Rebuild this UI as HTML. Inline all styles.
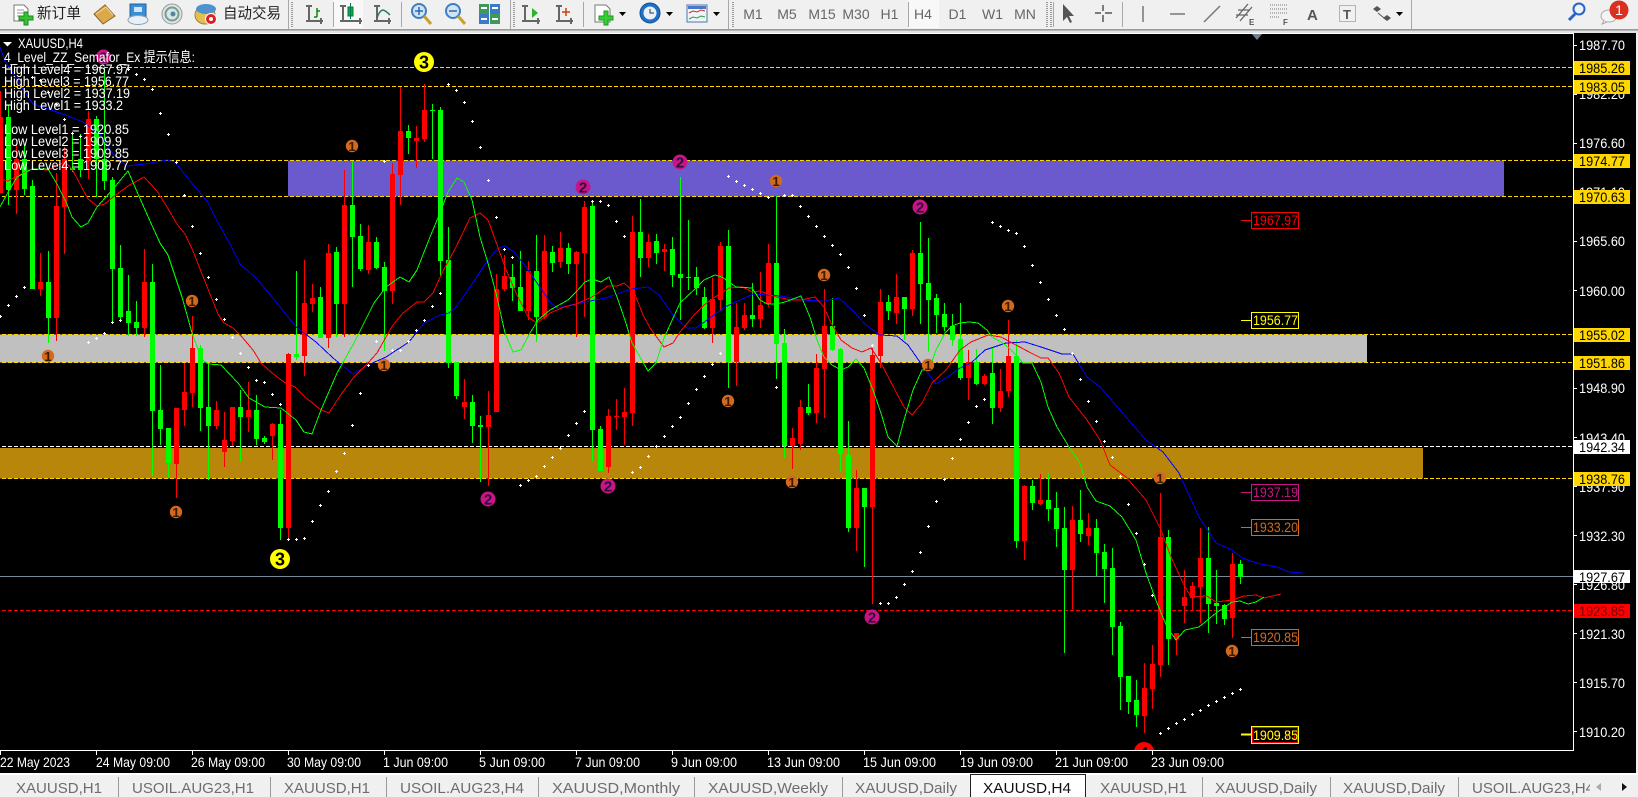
<!DOCTYPE html>
<html><head><meta charset="utf-8"><title>XAUUSD,H4</title>
<style>
html,body{margin:0;padding:0;background:#000;width:1638px;height:797px;overflow:hidden}
svg{position:absolute;left:0;top:0;display:block}
text{font-family:"Liberation Sans","Noto Sans CJK SC",sans-serif}
.ax{fill:#fff;font-size:14px}
.tg{fill:#000;font-size:14px}
.tm{fill:#fff;font-size:14px}
.tb{fill:#6d6d6d;font-size:15px}
.tf{fill:#666;font-size:14px;text-anchor:middle}
.lg{fill:#fff;font-size:14px}
.c1{fill:#d2691e}.c2{fill:#c71585}
.d1{font-size:13px;font-weight:bold;fill:#3a1a00;text-anchor:middle}
.d2{font-size:15px;font-weight:bold;fill:#300a38;text-anchor:middle}
</style></head><body>
<svg width="1638" height="797" viewBox="0 0 1638 797" xmlns="http://www.w3.org/2000/svg">
<defs><clipPath id="cl"><rect x="0" y="34" width="1573" height="716"/></clipPath></defs>
<rect width="1638" height="797" fill="#000"/>
<!-- toolbar -->
<rect width="1638" height="29" fill="#f0f0f0"/>
<rect y="29" width="1638" height="1" fill="#9a9a9a"/><rect y="30" width="1638" height="1" fill="#b4b4b4"/><rect y="31" width="1638" height="2" fill="#e2e2e2"/>
<rect x="0" y="33" width="1574" height="1" fill="#fff"/>
<rect x="333" y="0" width="30" height="28" fill="#f8f8f8"/><rect x="908" y="0" width="31" height="28" fill="#f8f8f8"/>
<g fill="#a8a8a8"><rect x="288" y="0" width="1" height="29"/><rect x="333" y="2" width="1" height="25"/><rect x="401" y="2" width="1" height="25"/><rect x="510" y="0" width="1" height="29"/><rect x="583" y="2" width="1" height="25"/><rect x="728" y="0" width="1" height="29"/><rect x="908" y="2" width="1" height="25"/><rect x="1053" y="2" width="1" height="25"/><rect x="1122" y="2" width="1" height="25"/><rect x="1411" y="0" width="1" height="29"/></g>
<g stroke="#999" stroke-width="2" stroke-dasharray="1 1" fill="none"><path d="M292 2V27M514 2V27M733 2V27M1047 2V27M1051 2V27"/></g>
<!-- new order -->
<path d="M14 5h10l4 4v12H14z" fill="#fff" stroke="#777"/><path d="M17 10h7M17 13h8M17 16h5" stroke="#999"/><path d="M24 15h4v4h5v4h-5v5h-4v-5h-5v-4h5z" transform="translate(0,-3)" fill="#35c035" stroke="#1d8a1d"/>
<text x="37" y="18" font-size="15" fill="#222" textLength="44" lengthAdjust="spacingAndGlyphs">新订单</text>
<path d="M94 14l11-9 10 11-12 8z" fill="#dca94a" stroke="#8a6528"/><path d="M96 14l10-7 7 8" fill="none" stroke="#f2d794"/>
<rect x="130" y="4" width="16" height="13" fill="#3b8ed4" stroke="#1f5f9a"/><rect x="134" y="7" width="8" height="5" fill="#cfe6f7"/><ellipse cx="138" cy="20" rx="10" ry="4.500" fill="#e8eff5" stroke="#8aa3b8"/>
<circle cx="172" cy="14" r="10" fill="#dfe3e3" stroke="#999"/><circle cx="172" cy="14" r="6.500" fill="none" stroke="#6f9f97" stroke-width="2"/><circle cx="173" cy="14" r="2.500" fill="#4a8a9a"/>
<ellipse cx="205" cy="15" rx="10" ry="9" fill="#e5c050" stroke="#a08030"/><ellipse cx="206" cy="9" rx="10" ry="5" fill="#4c93cf"/><circle cx="211" cy="19" r="5.500" fill="#e02020" stroke="#fff"/><circle cx="211" cy="19" r="2" fill="#fff"/>
<text x="223" y="18" font-size="15" fill="#222" textLength="58" lengthAdjust="spacingAndGlyphs">自动交易</text>
<!-- chart type icons -->
<g fill="none" stroke="#666" stroke-width="2">
<path d="M309 5V21H323M306 21H312M321 18V24M306 6H312"/><path d="M343 5V21H362M340 21H346M360 18V24M340 6H346"/><path d="M377 5V21H391M374 21H380M389 18V24M374 6H380"/><path d="M525 5V21H540M522 21H528M538 18V24M522 6H528"/><path d="M559 5V21H573M556 21H562M571 18V24M556 6H562"/>
</g>
<path d="M317 17V8M317 17h-3M317 11h3" stroke="#0a8a0a" stroke-width="1.500" fill="none"/>
<rect x="348" y="7" width="5" height="9" fill="#18b018" stroke="#075"/><path d="M350.500 3V19" stroke="#075"/>
<path d="M377 18c4-12 8-8 13-3" fill="none" stroke="#2a7a5a" stroke-width="1.500"/>
<path d="M532 8l6 5-6 5z" fill="#2ab52a"/>
<path d="M566 8v8M562 12h8" stroke="#d04010" stroke-width="1.500"/>
<!-- zoom -->
<circle cx="419" cy="11" r="7" fill="#cfe3f5" stroke="#3f7fbf" stroke-width="2"/><path d="M415 11h8M419 7v8" stroke="#2a6aaa" stroke-width="1.500"/><path d="M424 16l7 8" stroke="#c8a030" stroke-width="3"/>
<circle cx="453" cy="11" r="7" fill="#cfe3f5" stroke="#3f7fbf" stroke-width="2"/><path d="M449 11h8" stroke="#2a6aaa" stroke-width="1.500"/><path d="M458 16l7 8" stroke="#c8a030" stroke-width="3"/>
<rect x="479" y="4" width="10" height="10" fill="#3f9a5a"/><rect x="490" y="4" width="10" height="10" fill="#3a7ac8"/><rect x="479" y="14" width="10" height="10" fill="#3a7ac8"/><rect x="490" y="14" width="10" height="10" fill="#3f9a5a"/><path d="M481 8h6M492 8h6M481 19h6M492 19h6" stroke="#fff" stroke-width="2"/>
<!-- new chart etc -->
<path d="M595 5h11l4 4v13h-15z" fill="#fff" stroke="#777"/><path d="M604 15h4v5h5v4h-5v5h-4v-5h-5v-4h5z" transform="translate(0,-4)" fill="#35d035" stroke="#1d9a1d"/>
<circle cx="650" cy="13" r="10" fill="#1f70c8" stroke="#14508f"/><circle cx="650" cy="13" r="6.500" fill="#e8f0f8"/><path d="M650 9v4h4" stroke="#333" fill="none"/>
<rect x="687" y="5" width="20" height="17" fill="#eef4fa" stroke="#4a78a8"/><rect x="688" y="6" width="18" height="3" fill="#4a78c8"/><path d="M689 13l4-2 4 1 4-2 4 1" stroke="#d03020" fill="none"/><path d="M689 19l4-2 4 1 4-2 4 1" stroke="#30a040" fill="none"/>
<path d="M619 12h7l-3.500 4zM666 12h7l-3.500 4zM713 12h7l-3.500 4zM1396 12h7l-3.500 4z" fill="#000"/>
<text class="tf" x="753" y="19">M1</text><text class="tf" x="787" y="19">M5</text><text class="tf" x="822" y="19">M15</text><text class="tf" x="856" y="19">M30</text><text class="tf" x="889.500" y="19">H1</text><text class="tf" x="923" y="19">H4</text><text class="tf" x="957.500" y="19">D1</text><text class="tf" x="992.500" y="19">W1</text><text class="tf" x="1025" y="19">MN</text>
<path d="M1063 4v17l4-4 3 6 2-1-3-6h5z" fill="#555"/>
<path d="M1103 5V11M1103 15V22M1095 13H1101M1105 13H1112" stroke="#555" stroke-width="1.500" fill="none"/>
<path d="M1143 6V22" stroke="#777" stroke-width="1.500"/><path d="M1170 14H1185" stroke="#777" stroke-width="1.500"/><path d="M1204 22L1220 6" stroke="#777" stroke-width="1.500"/>
<path d="M1236 18L1248 4M1240 21L1252 7M1238 10h12M1236 15h12" stroke="#666" stroke-width="1.300" fill="none"/><text x="1249" y="25" font-size="8" font-weight="bold" fill="#555">E</text>
<path d="M1270 5h17M1270 9h17M1270 13h17M1270 17h10" stroke="#777" stroke-dasharray="1 1" fill="none"/><text x="1283" y="25" font-size="8" font-weight="bold" fill="#555">F</text>
<text x="1307" y="20" font-size="15" font-weight="bold" fill="#555">A</text>
<rect x="1339.500" y="5.500" width="16" height="16" fill="none" stroke="#777" stroke-dasharray="1 1"/><text x="1343" y="19" font-size="13" font-weight="bold" fill="#555">T</text>
<path d="M1373 9l4-3 4 3-4 3zM1383 18l4-3 4 3-4 3z" fill="#555"/><path d="M1378 13l6 5" stroke="#555"/>
<circle cx="1579" cy="9" r="5.500" fill="#e8f2fb" stroke="#2a62c8" stroke-width="2"/><path d="M1575 14l-6 6" stroke="#2a62c8" stroke-width="3"/>
<ellipse cx="1609" cy="16" rx="8" ry="6" fill="#f5f5f5" stroke="#aaa"/><path d="M1604 21l-2 3 5-2" fill="#f5f5f5" stroke="#aaa"/>
<circle cx="1619" cy="10" r="9.500" fill="#d93020"/><text x="1619" y="15" font-size="14" fill="#fff" text-anchor="middle">1</text>
<!-- chart -->
<g clip-path="url(#cl)">
<rect x="288" y="160.500" width="1216" height="36" fill="#6a5acd"/>
<rect x="0" y="334.500" width="1367" height="28" fill="#c0c0c0"/>
<rect x="0" y="448" width="1423" height="30.500" fill="#b8860b"/>
<g shape-rendering="crispEdges" fill="none" stroke-dasharray="4 2">
<path d="M2 67.500H1573M2 86.500H1573M2 160.500H1573M2 196.500H1573M2 334.500H1573M2 362.500H1573M2 478.500H1573" stroke="#ffd700"/>
<path d="M2 446.500H1573" stroke="#fff"/>
<path d="M2 610.500H1573" stroke="#f00"/>
</g>
<rect x="0" y="576" width="1573" height="1" fill="#778899"/>
<path d="M1251 33h12l-6 7z" fill="#708090"/>
<g shape-rendering="crispEdges" fill="none">
<path stroke="#0f0" d="M8.500 105V205M24.500 146V195M32.500 180V289M48.500 251V343M72.500 134V172M80.500 134V177M96.500 116V197M104.500 68V190M112.500 177V323M120.500 245V322M128.500 275V336M136.500 301V336M152.500 264V476M160.500 365V445M168.500 428V478M200.500 345V431M208.500 363V480M240.500 390V462M256.500 395V445M264.500 436V444M280.500 410V540M296.500 271V360M320.500 287V338M336.500 247V337M352.500 161V287M360.500 224V271M376.500 237V269M384.500 262V351M408.500 125V154M432.500 104V159M440.500 107V277M448.500 227V368M456.500 362V399M472.500 395V443M480.500 416V482M512.500 264V301M520.500 251V311M536.500 235V342M552.500 246V272M568.500 243V274M592.500 201V461M600.500 426V471M640.500 199V277M656.500 234V264M672.500 237V287M680.500 177V320M688.500 220V290M696.500 267V295M704.500 287V329M728.500 230V388M752.500 283V327M776.500 196V379M784.500 329V458M808.500 384V415M832.500 298V351M840.500 348V472M848.500 421V532M864.500 488V567M888.500 295V320M904.500 297V340M920.500 222V324M928.500 238V352M936.500 294V333M944.500 303V331M952.500 314V346M960.500 303V380M976.500 349V385M992.500 348V424M1016.500 340V548M1032.500 480V510M1048.500 473V521M1056.500 492V547M1064.500 507V653M1080.500 490V542M1096.500 519V576M1104.500 544V603M1112.500 548V655M1120.500 622V710M1128.500 676V714M1136.500 680V727M1168.500 530V665M1208.500 527V633M1216.500 570V624M1224.500 604V625M1240.500 560V584"/>
<path stroke="#0f0" stroke-width="5" d="M8.500 117V190M24.500 159V189M32.500 186V289M48.500 282V318M72.500 168V170M80.500 159V170M96.500 119V159M104.500 159V181M112.500 180V269M120.500 268V317M128.500 311V323M136.500 322V328M152.500 282V411M160.500 410V429M168.500 428V463M200.500 348V408M208.500 407V426M240.500 407V417M256.500 410V439M264.500 438V442M280.500 424V528M296.500 354V357M320.500 297V338M336.500 252V304M352.500 205V237M360.500 236V269M376.500 242V268M384.500 267V291M408.500 131V138M432.500 110V111M440.500 110V261M448.500 260V363M456.500 362V396M472.500 402V426M480.500 425V427M512.500 277V288M520.500 287V311M536.500 271V317M552.500 252V263M568.500 248V264M592.500 206V430M600.500 429V471M640.500 232V258M656.500 241V253M672.500 249V275M680.500 274V278M688.500 277V278M696.500 277V288M704.500 297V328M728.500 246V362M752.500 315V319M776.500 263V344M784.500 343V446M808.500 407V413M832.500 326V350M840.500 349V454M848.500 455V528M864.500 488V507M888.500 302V311M904.500 297V309M920.500 253V284M928.500 283V300M936.500 298V315M944.500 314V327M952.500 326V340M960.500 339V378M976.500 362V384M992.500 373V408M1016.500 356V541M1032.500 486V503M1048.500 500V509M1056.500 508V529M1064.500 528V570M1080.500 520V534M1096.500 528V553M1104.500 552V569M1112.500 568V627M1120.500 626V677M1128.500 676V702M1136.500 700V715M1168.500 537V639M1208.500 558V604M1216.500 603V606M1224.500 605V619M1240.500 564V577"/>
<path stroke="#f00" d="M.5 91V193M16.500 144V214M40.500 253V296M56.500 173V341M64.500 147V254M88.500 111V179M144.500 249V337M176.500 408V498M184.500 363V426M192.500 316V407M216.500 401V429M224.500 412V467M232.500 407V446M248.500 382V432M272.500 423V460M288.500 353V538M304.500 260V376M312.500 284V312M328.500 244V348M344.500 170V337M368.500 225V274M392.500 163V304M400.500 87V205M416.500 126V168M424.500 84V142M464.500 379V419M488.500 391V486M496.500 274V412M504.500 255V291M528.500 261V320M544.500 235V319M560.500 232V268M576.500 251V337M584.500 201V317M608.500 409V473M616.500 399V430M624.500 388V445M632.500 216V426M648.500 234V267M664.500 244V271M712.500 278V343M720.500 242V311M736.500 303V386M744.500 303V330M760.500 272V328M768.500 244V307M792.500 428V469M800.500 400V450M816.500 354V423M824.500 289V418M856.500 470V551M872.500 348V604M880.500 289V368M896.500 274V324M912.500 250V316M968.500 350V400M984.500 374V385M1000.500 369V412M1008.500 320V397M1024.500 485V560M1040.500 474V505M1072.500 506V609M1088.500 513V545M1144.500 663V733M1152.500 645V709M1160.500 493V677M1176.500 633V655M1184.500 570V623M1192.500 582V611M1200.500 528V623M1232.500 553V638"/>
<path stroke="#f00" stroke-width="5" d="M.5 117V193M16.500 159V190M40.500 282V289M56.500 206V318M64.500 159V207M88.500 119V161M144.500 282V328M176.500 408V464M184.500 392V410M192.500 348V393M216.500 410V426M224.500 440V452M232.500 407V441M248.500 410V417M272.500 424V436M288.500 354V528M304.500 303V356M312.500 298V304M328.500 253V338M344.500 205V304M368.500 242V270M392.500 174V291M400.500 131V175M416.500 138V141M424.500 110V139M464.500 402V407M488.500 415V427M496.500 289V412M504.500 276V289M528.500 271V311M544.500 251V317M560.500 248V262M576.500 252V264M584.500 207V253M608.500 416V467M616.500 416V417M624.500 412V417M632.500 232V413M648.500 242V258M664.500 249V252M712.500 299V328M720.500 246V300M736.500 327V362M744.500 315V328M760.500 305V319M768.500 263V304M792.500 438V446M800.500 407V444M816.500 368V413M824.500 326V369M856.500 488V528M872.500 355V507M880.500 302V356M896.500 297V313M912.500 253V309M968.500 362V378M984.500 376V384M1000.500 391V408M1008.500 356V391M1024.500 486V541M1040.500 500V504M1072.500 520V570M1088.500 528V536M1144.500 688V716M1152.500 664V689M1160.500 537V665M1176.500 633V639M1184.500 597V606M1192.500 586V598M1200.500 558V587M1232.500 564V618"/>
</g>
<g fill="none" shape-rendering="crispEdges">
<polyline stroke="#00f" points="0,47 5,61 23,89 33,104 63,114 83,122 100,134 113,154 127,166 145,164 167,160 175,162 190,181 207,201 217,221 230,244 240,264 257,279 277,303 296,327 316,342 333,358 353,374 368,365 386,357 409,342 424,323 440,315 449,313 456,307 470,287 486,263 498,248 505,246 514,252 523,263 533,277 550,302 557,308 585,302 606,298 631,289 648,287 659,295 673,315 687,328 696,328 725,307 753,294 781,296 801,300 824,301 839,298 852,310 866,325 880,335 897,336 908,345 922,365 936,384 946,378 960,368 971,363 985,350 1006,343 1025,342 1041,347 1062,354 1073,354 1087,377 1100,387 1146,440 1163,452 1179,473 1199,517 1216,543 1232,550 1242,558 1260,564 1277,567 1289,572 1303,573"/>
<polyline stroke="#f00" points="0,179 8,181 17,176 32,169 48,170 65,162 72,169 80,184 88,199 97,206 105,204 113,197 128,186 144,177 157,191 167,207 177,224 185,234 193,251 202,274 210,294 218,314 224,323 233,328 242,337 253,350 261,363 272,373 284,382 295,387 305,397 321,410 329,413 342,393 354,377 368,363 377,353 386,337 393,325 403,313 417,302 424,302 433,293 442,273 456,247 470,218 480,213 488,220 496,242 505,267 516,293 528,317 537,323 550,313 564,307 576,304 592,297 608,286 617,286 624,283 634,292 643,315 650,328 664,347 673,343 680,332 694,315 704,305 715,297 729,288 743,287 752,292 760,291 776,297 792,300 801,300 815,297 824,307 831,323 841,340 852,348 862,352 871,348 881,363 895,390 904,407 912,415 922,403 932,383 946,370 960,350 971,342 988,335 1001,337 1016,345 1031,353 1041,358 1048,358 1059,373 1069,397 1087,420 1100,440 1110,465 1126,477 1146,500 1161,530 1171,557 1183,583 1191,597 1207,596 1216,602 1232,600 1244,596 1256,595 1264,598 1281,594"/>
<polyline stroke="#0f0" points="0,207 7,194 17,177 32,169 48,169 57,184 67,204 72,217 81,227 88,223 97,207 113,189 128,171 138,194 150,221 160,243 168,255 182,297 192,333 202,360 209,364 221,365 238,383 249,398 265,407 281,408 296,420 304,432 312,434 321,410 337,373 354,343 374,303 386,287 400,277 409,282 417,270 430,237 440,213 448,192 457,178 464,182 472,200 480,237 488,263 496,293 505,333 513,352 521,350 530,333 538,320 550,310 568,300 576,292 585,282 592,279 601,282 609,277 617,297 625,320 632,343 648,371 656,363 664,338 680,303 696,288 704,280 715,275 722,277 736,287 752,288 760,300 767,304 776,304 785,302 801,296 810,317 817,340 824,357 832,365 841,370 848,367 856,359 864,368 873,390 881,413 888,437 897,446 904,420 913,390 922,370 929,370 936,350 945,333 952,326 960,323 969,322 978,323 987,330 992,337 1001,342 1009,348 1016,355 1023,363 1032,363 1041,382 1048,407 1057,427 1069,447 1080,463 1087,487 1096,501 1110,506 1122,517 1136,540 1146,573 1157,603 1167,627 1176,640 1185,630 1199,627 1216,613 1232,602 1240,601 1248,604 1256,602 1264,597"/>
</g>
<path shape-rendering="crispEdges" fill="none" stroke="#fff" d="M-1 316.500h3m-1.500-1.500v3M7 305.500h3m-1.500-1.500v3M15 296.500h3m-1.500-1.500v3M23 287.500h3m-1.500-1.500v3M31 77.500h3m-1.500-1.500v3M39 80.500h3m-1.500-1.500v3M47 92.500h3m-1.500-1.500v3M55 104.500h3m-1.500-1.500v3M63 119.500h3m-1.500-1.500v3M71 133.500h3m-1.500-1.500v3M79 136.500h3m-1.500-1.500v3M87 342.500h3m-1.500-1.500v3M95 338.500h3m-1.500-1.500v3M103 333.500h3m-1.500-1.500v3M111 322.500h3m-1.500-1.500v3M119 320.500h3m-1.500-1.500v3M127 69.500h3m-1.500-1.500v3M135 74.500h3m-1.500-1.500v3M143 79.500h3m-1.500-1.500v3M151 89.500h3m-1.500-1.500v3M159 113.500h3m-1.500-1.500v3M167 134.500h3m-1.500-1.500v3M175 162.500h3m-1.500-1.500v3M183 195.500h3m-1.500-1.500v3M191 226.500h3m-1.500-1.500v3M199 253.500h3m-1.500-1.500v3M207 277.500h3m-1.500-1.500v3M215 299.500h3m-1.500-1.500v3M223 319.500h3m-1.500-1.500v3M231 337.500h3m-1.500-1.500v3M239 353.500h3m-1.500-1.500v3M247 367.500h3m-1.500-1.500v3M255 380.500h3m-1.500-1.500v3M263 382.500h3m-1.500-1.500v3M271 394.500h3m-1.500-1.500v3M279 404.500h3m-1.500-1.500v3M287 539.500h3m-1.500-1.500v3M295 539.500h3m-1.500-1.500v3M303 538.500h3m-1.500-1.500v3M311 521.500h3m-1.500-1.500v3M319 505.500h3m-1.500-1.500v3M327 491.500h3m-1.500-1.500v3M335 471.500h3m-1.500-1.500v3M343 453.500h3m-1.500-1.500v3M351 425.500h3m-1.500-1.500v3M359 393.500h3m-1.500-1.500v3M367 365.500h3m-1.500-1.500v3M375 341.500h3m-1.500-1.500v3M383 161.500h3m-1.500-1.500v3M391 350.500h3m-1.500-1.500v3M399 350.500h3m-1.500-1.500v3M407 341.500h3m-1.500-1.500v3M415 330.500h3m-1.500-1.500v3M423 320.500h3m-1.500-1.500v3M431 306.500h3m-1.500-1.500v3M439 293.500h3m-1.500-1.500v3M447 84.500h3m-1.500-1.500v3M455 90.500h3m-1.500-1.500v3M463 102.500h3m-1.500-1.500v3M471 121.500h3m-1.500-1.500v3M479 147.500h3m-1.500-1.500v3M487 180.500h3m-1.500-1.500v3M495 217.500h3m-1.500-1.500v3M503 249.500h3m-1.500-1.500v3M511 257.500h3m-1.500-1.500v3M519 485.500h3m-1.500-1.500v3M527 480.500h3m-1.500-1.500v3M535 476.500h3m-1.500-1.500v3M543 466.500h3m-1.500-1.500v3M551 457.500h3m-1.500-1.500v3M559 448.500h3m-1.500-1.500v3M567 435.500h3m-1.500-1.500v3M575 423.500h3m-1.500-1.500v3M583 411.500h3m-1.500-1.500v3M591 201.500h3m-1.500-1.500v3M599 201.500h3m-1.500-1.500v3M607 205.500h3m-1.500-1.500v3M615 221.500h3m-1.500-1.500v3M623 236.500h3m-1.500-1.500v3M631 472.500h3m-1.500-1.500v3M639 467.500h3m-1.500-1.500v3M647 456.500h3m-1.500-1.500v3M655 446.500h3m-1.500-1.500v3M663 436.500h3m-1.500-1.500v3M671 426.500h3m-1.500-1.500v3M679 417.500h3m-1.500-1.500v3M687 403.500h3m-1.500-1.500v3M695 389.500h3m-1.500-1.500v3M703 376.500h3m-1.500-1.500v3M711 364.500h3m-1.500-1.500v3M719 353.500h3m-1.500-1.500v3M727 176.500h3m-1.500-1.500v3M735 181.500h3m-1.500-1.500v3M743 185.500h3m-1.500-1.500v3M751 189.500h3m-1.500-1.500v3M759 193.500h3m-1.500-1.500v3M767 197.500h3m-1.500-1.500v3M775 387.500h3m-1.500-1.500v3M783 195.500h3m-1.500-1.500v3M791 195.500h3m-1.500-1.500v3M799 206.500h3m-1.500-1.500v3M807 216.500h3m-1.500-1.500v3M815 226.500h3m-1.500-1.500v3M823 236.500h3m-1.500-1.500v3M831 245.500h3m-1.500-1.500v3M839 254.500h3m-1.500-1.500v3M847 267.500h3m-1.500-1.500v3M855 288.500h3m-1.500-1.500v3M863 315.500h3m-1.500-1.500v3M871 345.500h3m-1.500-1.500v3M879 603.500h3m-1.500-1.500v3M887 603.500h3m-1.500-1.500v3M895 597.500h3m-1.500-1.500v3M903 584.500h3m-1.500-1.500v3M911 571.500h3m-1.500-1.500v3M919 552.500h3m-1.500-1.500v3M927 526.500h3m-1.500-1.500v3M935 501.500h3m-1.500-1.500v3M943 479.500h3m-1.500-1.500v3M951 458.500h3m-1.500-1.500v3M959 439.500h3m-1.500-1.500v3M967 422.500h3m-1.500-1.500v3M975 406.500h3m-1.500-1.500v3M983 399.500h3m-1.500-1.500v3M991 222.500h3m-1.500-1.500v3M999 226.500h3m-1.500-1.500v3M1007 230.500h3m-1.500-1.500v3M1015 233.500h3m-1.500-1.500v3M1023 246.500h3m-1.500-1.500v3M1031 265.500h3m-1.500-1.500v3M1039 282.500h3m-1.500-1.500v3M1047 299.500h3m-1.500-1.500v3M1055 315.500h3m-1.500-1.500v3M1063 329.500h3m-1.500-1.500v3M1071 353.500h3m-1.500-1.500v3M1079 379.500h3m-1.500-1.500v3M1087 401.500h3m-1.500-1.500v3M1095 421.500h3m-1.500-1.500v3M1103 441.500h3m-1.500-1.500v3M1111 457.500h3m-1.500-1.500v3M1119 476.500h3m-1.500-1.500v3M1127 504.500h3m-1.500-1.500v3M1135 533.500h3m-1.500-1.500v3M1143 564.500h3m-1.500-1.500v3M1151 595.500h3m-1.500-1.500v3M1159 733.500h3m-1.500-1.500v3M1167 728.500h3m-1.500-1.500v3M1175 723.500h3m-1.500-1.500v3M1183 719.500h3m-1.500-1.500v3M1191 714.500h3m-1.500-1.500v3M1199 710.500h3m-1.500-1.500v3M1207 705.500h3m-1.500-1.500v3M1215 701.500h3m-1.500-1.500v3M1223 697.500h3m-1.500-1.500v3M1231 693.500h3m-1.500-1.500v3M1239 689.500h3m-1.500-1.500v3"/>
<!-- semafor 1 -->
<g class="c1">
<circle cx="48" cy="356" r="6.200"/><circle cx="192" cy="301" r="6.200"/><circle cx="176" cy="512" r="6.200"/><circle cx="384" cy="365" r="6.200"/><circle cx="352" cy="146" r="6.200"/><circle cx="728" cy="401" r="6.200"/><circle cx="824" cy="275" r="6.200"/><circle cx="792" cy="482" r="6.200"/><circle cx="928" cy="365" r="6.200"/><circle cx="1008" cy="306" r="6.200"/><circle cx="776" cy="181" r="6.200"/><circle cx="1160" cy="478" r="6.200"/><circle cx="1232" cy="651" r="6.200"/>
</g>
<g class="d1"><text x="48" y="361">1</text><text x="192" y="306">1</text><text x="176" y="517">1</text><text x="384" y="370">1</text><text x="352" y="151">1</text><text x="728" y="406">1</text><text x="824" y="280">1</text><text x="792" y="487">1</text><text x="928" y="370">1</text><text x="1008" y="311">1</text><text x="776" y="186">1</text><text x="1160" y="483">1</text><text x="1232" y="656">1</text></g>
<!-- semafor 2 -->
<g class="c2"><circle cx="103.500" cy="57" r="7.500"/><circle cx="488" cy="499" r="7.500"/><circle cx="583" cy="187" r="7.500"/><circle cx="680" cy="162" r="7.500"/><circle cx="920" cy="207" r="7.500"/><circle cx="608" cy="486" r="7.500"/><circle cx="872" cy="617" r="7.500"/></g>
<g class="d2"><text x="103.500" y="62.500">2</text><text x="488" y="504.500">2</text><text x="583" y="192.500">2</text><text x="680" y="167.500">2</text><text x="920" y="212.500">2</text><text x="608" y="491.500">2</text><text x="872" y="622.500">2</text></g>
<!-- semafor 3/4 -->
<circle cx="424" cy="62" r="10" fill="#ff0"/><text x="424" y="68.500" font-size="18" font-weight="bold" text-anchor="middle" fill="#000">3</text>
<circle cx="280" cy="559" r="10" fill="#ff0"/><text x="280" y="565.500" font-size="18" font-weight="bold" text-anchor="middle" fill="#000">3</text>
<circle cx="1144" cy="752" r="10" fill="#f00"/><text x="1144" y="758" font-size="16" font-weight="bold" text-anchor="middle" fill="#000">4</text>
<!-- level boxes -->
<g fill="none" shape-rendering="crispEdges">
<path d="M1241 220.500h10" stroke="#f00"/><rect x="1251.500" y="212.500" width="47" height="16" stroke="#f00"/>
<path d="M1241 320.500h10" stroke="#ff0"/><rect x="1251.500" y="312.500" width="47" height="16" stroke="#ff0"/>
<path d="M1241 492.500h10" stroke="#c71585"/><rect x="1251.500" y="484.500" width="47" height="16" stroke="#c71585"/>
<path d="M1241 527.500h10" stroke="#d2691e"/><rect x="1251.500" y="519.500" width="47" height="16" stroke="#d2691e"/>
<path d="M1241 637.500h10" stroke="#d2691e"/><rect x="1251.500" y="629.500" width="47" height="16" stroke="#d2691e"/>
<path d="M1241 734.500h10" stroke="#ff0" stroke-width="2"/><rect x="1251.500" y="726.500" width="47" height="17" stroke="#ff0"/><rect x="1252.500" y="727.500" width="45" height="15" stroke="#f00"/>
</g>
<g font-size="14">
<text x="1253" y="225" fill="#f00" textLength="45" lengthAdjust="spacingAndGlyphs">1967.97</text>
<text x="1253" y="325" fill="#ff0" textLength="45" lengthAdjust="spacingAndGlyphs">1956.77</text>
<text x="1253" y="497" fill="#c71585" textLength="45" lengthAdjust="spacingAndGlyphs">1937.19</text>
<text x="1253" y="532" fill="#d2691e" textLength="45" lengthAdjust="spacingAndGlyphs">1933.20</text>
<text x="1253" y="642" fill="#d2691e" textLength="45" lengthAdjust="spacingAndGlyphs">1920.85</text>
<text x="1253" y="740" fill="#f00" textLength="45" lengthAdjust="spacingAndGlyphs">1909.77</text>
<text x="1253" y="740" fill="#ff0" textLength="45" lengthAdjust="spacingAndGlyphs">1909.85</text>
</g>
<!-- legend -->
<path d="M3 42h9l-4.500 4.500z" fill="#fff"/>
<text class="lg" x="18" y="48" textLength="65" lengthAdjust="spacingAndGlyphs">XAUUSD,H4</text>
<text class="lg" x="4" y="62" textLength="191" lengthAdjust="spacingAndGlyphs">4_Level_ZZ_Semafor_Ex 提示信息:</text>
<text class="lg" x="4" y="74" textLength="126" lengthAdjust="spacingAndGlyphs">High Level4 = 1967.97</text>
<text class="lg" x="4" y="86" textLength="125" lengthAdjust="spacingAndGlyphs">High Level3 = 1956.77</text>
<text class="lg" x="4" y="98" textLength="126" lengthAdjust="spacingAndGlyphs">High Level2 = 1937.19</text>
<text class="lg" x="4" y="110" textLength="119" lengthAdjust="spacingAndGlyphs">High Level1 = 1933.2</text>
<text class="lg" x="4" y="134" textLength="125" lengthAdjust="spacingAndGlyphs">Low Level1 = 1920.85</text>
<text class="lg" x="4" y="146" textLength="118" lengthAdjust="spacingAndGlyphs">Low Level2 = 1909.9</text>
<text class="lg" x="4" y="158" textLength="125" lengthAdjust="spacingAndGlyphs">Low Level3 = 1909.85</text>
<text class="lg" x="4" y="170" textLength="125" lengthAdjust="spacingAndGlyphs">Low Level4 = 1909.77</text>
</g>
<!-- axes -->
<rect x="1573" y="33" width="1" height="718" fill="#fff"/>
<rect x="0" y="750" width="1574" height="1" fill="#fff"/>
<g fill="#fff"><rect x="1574" y="45" width="3" height="1"/><rect x="1574" y="94" width="3" height="1"/><rect x="1574" y="143" width="3" height="1"/><rect x="1574" y="192" width="3" height="1"/><rect x="1574" y="241" width="3" height="1"/><rect x="1574" y="290" width="3" height="1"/><rect x="1574" y="388" width="3" height="1"/><rect x="1574" y="437" width="3" height="1"/><rect x="1574" y="486" width="3" height="1"/><rect x="1574" y="535" width="3" height="1"/><rect x="1574" y="584" width="3" height="1"/><rect x="1574" y="633" width="3" height="1"/><rect x="1574" y="682" width="3" height="1"/><rect x="1574" y="731" width="3" height="1"/>
<rect x="96" y="751" width="1" height="4"/><rect x="192" y="751" width="1" height="4"/><rect x="288" y="751" width="1" height="4"/><rect x="384" y="751" width="1" height="4"/><rect x="480" y="751" width="1" height="4"/><rect x="576" y="751" width="1" height="4"/><rect x="672" y="751" width="1" height="4"/><rect x="768" y="751" width="1" height="4"/><rect x="864" y="751" width="1" height="4"/><rect x="960" y="751" width="1" height="4"/><rect x="1056" y="751" width="1" height="4"/><rect x="1152" y="751" width="1" height="4"/><rect x="0" y="751" width="1" height="4"/></g>
<text class="ax" x="1579" y="50" textLength="46" lengthAdjust="spacingAndGlyphs">1987.70</text>
<text class="ax" x="1579" y="99" textLength="46" lengthAdjust="spacingAndGlyphs">1982.20</text>
<text class="ax" x="1579" y="148" textLength="46" lengthAdjust="spacingAndGlyphs">1976.60</text>
<text class="ax" x="1579" y="197" textLength="46" lengthAdjust="spacingAndGlyphs">1971.10</text>
<text class="ax" x="1579" y="246" textLength="46" lengthAdjust="spacingAndGlyphs">1965.60</text>
<text class="ax" x="1579" y="296" textLength="46" lengthAdjust="spacingAndGlyphs">1960.00</text>
<text class="ax" x="1579" y="393" textLength="46" lengthAdjust="spacingAndGlyphs">1948.90</text>
<text class="ax" x="1579" y="443" textLength="46" lengthAdjust="spacingAndGlyphs">1943.40</text>
<text class="ax" x="1579" y="492" textLength="46" lengthAdjust="spacingAndGlyphs">1937.90</text>
<text class="ax" x="1579" y="541" textLength="46" lengthAdjust="spacingAndGlyphs">1932.30</text>
<text class="ax" x="1579" y="590" textLength="46" lengthAdjust="spacingAndGlyphs">1926.80</text>
<text class="ax" x="1579" y="639" textLength="46" lengthAdjust="spacingAndGlyphs">1921.30</text>
<text class="ax" x="1579" y="688" textLength="46" lengthAdjust="spacingAndGlyphs">1915.70</text>
<text class="ax" x="1579" y="737" textLength="46" lengthAdjust="spacingAndGlyphs">1910.20</text>
<!-- price tags -->
<g fill="#ffd700"><rect x="1574" y="61" width="56" height="14"/><rect x="1574" y="80" width="56" height="14"/><rect x="1574" y="154" width="56" height="14"/><rect x="1574" y="190" width="56" height="14"/><rect x="1574" y="328" width="56" height="14"/><rect x="1574" y="356" width="56" height="14"/><rect x="1574" y="472" width="56" height="14"/></g>
<rect x="1574" y="440" width="56" height="14" fill="#fff"/><rect x="1574" y="570" width="56" height="13" fill="#fff"/><rect x="1574" y="604" width="56" height="14" fill="#f00"/>
<text class="tg" x="1579" y="73" textLength="46" lengthAdjust="spacingAndGlyphs">1985.26</text>
<text class="tg" x="1579" y="92" textLength="46" lengthAdjust="spacingAndGlyphs">1983.05</text>
<text class="tg" x="1579" y="166" textLength="46" lengthAdjust="spacingAndGlyphs">1974.77</text>
<text class="tg" x="1579" y="202" textLength="46" lengthAdjust="spacingAndGlyphs">1970.63</text>
<text class="tg" x="1579" y="340" textLength="46" lengthAdjust="spacingAndGlyphs">1955.02</text>
<text class="tg" x="1579" y="368" textLength="46" lengthAdjust="spacingAndGlyphs">1951.86</text>
<text class="tg" x="1579" y="452" textLength="46" lengthAdjust="spacingAndGlyphs">1942.34</text>
<text class="tg" x="1579" y="484" textLength="46" lengthAdjust="spacingAndGlyphs">1938.76</text>
<text class="tg" x="1579" y="582" textLength="46" lengthAdjust="spacingAndGlyphs">1927.67</text>
<text x="1579" y="616" font-size="14" fill="#700" textLength="46" lengthAdjust="spacingAndGlyphs">1923.85</text>
<rect x="1636" y="33" width="2" height="741" fill="#f0f0f0"/>
<!-- time axis -->
<text class="tm" x="0" y="767" textLength="70" lengthAdjust="spacingAndGlyphs">22 May 2023</text>
<text class="tm" x="96" y="767" textLength="74" lengthAdjust="spacingAndGlyphs">24 May 09:00</text>
<text class="tm" x="191" y="767" textLength="74" lengthAdjust="spacingAndGlyphs">26 May 09:00</text>
<text class="tm" x="287" y="767" textLength="74" lengthAdjust="spacingAndGlyphs">30 May 09:00</text>
<text class="tm" x="383" y="767" textLength="65" lengthAdjust="spacingAndGlyphs">1 Jun 09:00</text>
<text class="tm" x="479" y="767" textLength="66" lengthAdjust="spacingAndGlyphs">5 Jun 09:00</text>
<text class="tm" x="575" y="767" textLength="65" lengthAdjust="spacingAndGlyphs">7 Jun 09:00</text>
<text class="tm" x="671" y="767" textLength="66" lengthAdjust="spacingAndGlyphs">9 Jun 09:00</text>
<text class="tm" x="767" y="767" textLength="73" lengthAdjust="spacingAndGlyphs">13 Jun 09:00</text>
<text class="tm" x="863" y="767" textLength="73" lengthAdjust="spacingAndGlyphs">15 Jun 09:00</text>
<text class="tm" x="960" y="767" textLength="73" lengthAdjust="spacingAndGlyphs">19 Jun 09:00</text>
<text class="tm" x="1055" y="767" textLength="73" lengthAdjust="spacingAndGlyphs">21 Jun 09:00</text>
<text class="tm" x="1151" y="767" textLength="73" lengthAdjust="spacingAndGlyphs">23 Jun 09:00</text>
<!-- tabs -->
<rect x="0" y="773" width="1638" height="24" fill="#f0f0f0"/>
<rect x="0" y="773" width="1638" height="2" fill="#fff"/>
<rect x="971" y="774" width="115" height="23" fill="#fff"/>
<g fill="#9a9a9a"><rect x="118" y="777" width="1" height="20"/><rect x="270" y="777" width="1" height="20"/><rect x="386" y="777" width="1" height="20"/><rect x="538" y="777" width="1" height="20"/><rect x="694" y="777" width="1" height="20"/><rect x="842" y="777" width="1" height="20"/><rect x="1202" y="777" width="1" height="20"/><rect x="1330" y="777" width="1" height="20"/><rect x="1458" y="777" width="1" height="20"/></g>
<rect x="970" y="775" width="1" height="22" fill="#222"/><rect x="1085" y="775" width="1" height="22" fill="#222"/><rect x="970" y="774" width="116" height="1" fill="#222"/>
<text class="tb" x="16" y="793" textLength="86" lengthAdjust="spacingAndGlyphs">XAUUSD,H1</text>
<text class="tb" x="132" y="793" textLength="122" lengthAdjust="spacingAndGlyphs">USOIL.AUG23,H1</text>
<text class="tb" x="284" y="793" textLength="86" lengthAdjust="spacingAndGlyphs">XAUUSD,H1</text>
<text class="tb" x="400" y="793" textLength="124" lengthAdjust="spacingAndGlyphs">USOIL.AUG23,H4</text>
<text class="tb" x="552" y="793" textLength="128" lengthAdjust="spacingAndGlyphs">XAUUSD,Monthly</text>
<text class="tb" x="708" y="793" textLength="120" lengthAdjust="spacingAndGlyphs">XAUUSD,Weekly</text>
<text class="tb" x="855" y="793" textLength="102" lengthAdjust="spacingAndGlyphs">XAUUSD,Daily</text>
<text x="983" y="793" font-size="15" fill="#111" textLength="88" lengthAdjust="spacingAndGlyphs">XAUUSD,H4</text>
<text class="tb" x="1100" y="793" textLength="87" lengthAdjust="spacingAndGlyphs">XAUUSD,H1</text>
<text class="tb" x="1215" y="793" textLength="102" lengthAdjust="spacingAndGlyphs">XAUUSD,Daily</text>
<text class="tb" x="1343" y="793" textLength="102" lengthAdjust="spacingAndGlyphs">XAUUSD,Daily</text>
<text class="tb" x="1472" y="793" textLength="122" lengthAdjust="spacingAndGlyphs">USOIL.AUG23,H4</text>
<rect x="1590" y="775" width="48" height="22" fill="#f0f0f0"/>
<path d="M1601 783l-5 4 5 4z" fill="#aaa"/><path d="M1622 783l5 4-5 4z" fill="#111"/>
</svg>
</body></html>
